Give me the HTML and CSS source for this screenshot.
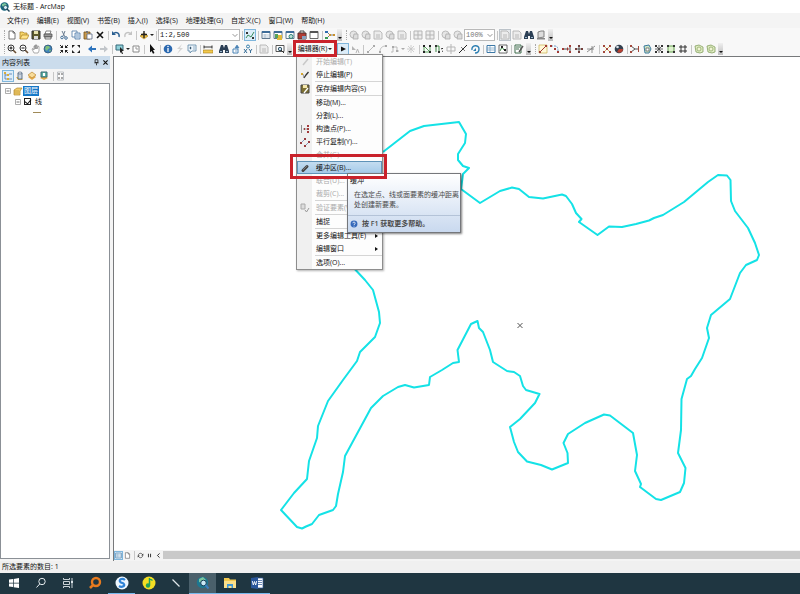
FILE: index.html
```html
<!DOCTYPE html>
<html lang="zh-CN">
<head>
    <meta charset="UTF-8">
    <meta name="viewport" content="width=device-width, initial-scale=1.0">
    <title>无标题 - ArcMap</title>
    <link rel="stylesheet" href="styles.css">
</head>
<body>
    <!-- icon set, 10x10 grid -->
    <svg class="defs" aria-hidden="true">
        <symbol id="new" viewBox="0 0 10 10"><path d="M2 1h4l2 2v6H2zM6 1v2h2" fill="#fff" stroke="#555" stroke-width=".8"/></symbol>
        <symbol id="open" viewBox="0 0 10 10"><path d="M1 9V2h3l1 1h3v2" fill="#f5d56b" stroke="#a67c1e" stroke-width=".7"/><path d="M1 9l2-4h7L8 9z" fill="#ffe48a" stroke="#a67c1e" stroke-width=".7"/></symbol>
        <symbol id="save" viewBox="0 0 10 10"><path d="M1 1h8v8H1z" fill="#5d5a2c" stroke="#333"/><path d="M3 1h4v3H3z" fill="#e8e3b0"/><path d="M3 6h4v3H3z" fill="#ddd"/></symbol>
        <symbol id="print" viewBox="0 0 10 10"><path d="M3 1h5L7 4H2z" fill="#fff" stroke="#555" stroke-width=".7"/><path d="M1 4h8v3H1z" fill="#999" stroke="#444" stroke-width=".7"/><path d="M2 7h6v2H2z" fill="#eee" stroke="#444" stroke-width=".7"/></symbol>
        <symbol id="cut" viewBox="0 0 10 10"><path d="M3 1l3 6M6 1L4 6" stroke="#6b7d90" fill="none"/><circle cx="3" cy="7.500" r="1.300" fill="none" stroke="#46729c"/><circle cx="7" cy="8" r="1.300" fill="none" stroke="#46729c"/></symbol>
        <symbol id="copy" viewBox="0 0 10 10"><path d="M1 1h5v6H1z" fill="#fff" stroke="#4c77a3" stroke-width=".8"/><path d="M4 3h5v6H4z" fill="#dce9f7" stroke="#4c77a3" stroke-width=".8"/><path d="M5 5h3M5 7h3" stroke="#4c77a3" stroke-width=".6"/></symbol>
        <symbol id="paste" viewBox="0 0 10 10"><path d="M1 2h6v7H1z" fill="#c99a4b" stroke="#75511b" stroke-width=".8"/><path d="M3 1h2v2H3z" fill="#777"/><path d="M4 4h5v5H4z" fill="#fff" stroke="#5a6b85" stroke-width=".8"/></symbol>
        <symbol id="cross" viewBox="0 0 10 10"><path d="M2 2l6 6M8 2L2 8" stroke="#111" stroke-width="1.600"/></symbol>
        <symbol id="undo" viewBox="0 0 10 10"><path d="M2 4c3-3 7-1 6 3" fill="none" stroke="#2a5f91" stroke-width="1.400"/><path d="M1 1v4h4z" fill="#2a5f91"/></symbol>
        <symbol id="redo" viewBox="0 0 10 10"><path d="M8 4C5 1 1 3 2 7" fill="none" stroke="#c3c3c3" stroke-width="1.300"/><path d="M9 1v4H5z" fill="#c3c3c3"/></symbol>
        <symbol id="add" viewBox="0 0 10 10"><path d="M5 3l4 3-4 3-4-3z" fill="#f3c443" stroke="#a87b18" stroke-width=".6"/><path d="M5 1v7M2 4.500h6" stroke="#222" stroke-width="1.400"/></symbol>
        <symbol id="editkit" viewBox="0 0 10 10"><path d="M1 8l2-3 3 2 3-5" fill="none" stroke="#3b8c5c"/><path d="M1 2h2v2H1zM7 7h2v2H7z" fill="#333"/></symbol>
        <symbol id="win" viewBox="0 0 10 10"><path d="M1 1.500h8v7H1z" fill="#fff" stroke="#60788e"/><path d="M1 1h8v2H1z" fill="#3e6d99"/><path d="M2 5h6M2 7h6M4 4v4" stroke="#8aa5bd" stroke-width=".6"/></symbol>
        <symbol id="wingreen" viewBox="0 0 10 10"><path d="M1 1.500h8v7H1z" fill="#fff" stroke="#60788e"/><path d="M1 1h8v2H1z" fill="#3e6d99"/><path d="M4 5h5v5H4z" fill="#e0b93c"/><path d="M2 4h3v4H2z" fill="#57a35b"/></symbol>
        <symbol id="winfind" viewBox="0 0 10 10"><path d="M1 1.500h8v7H1z" fill="#fff" stroke="#60788e"/><path d="M1 1h8v2H1z" fill="#3e6d99"/><circle cx="6" cy="6.500" r="2" fill="#bfe0d8" stroke="#2f8579"/></symbol>
        <symbol id="toolbox" viewBox="0 0 10 10"><path d="M1 3h8v6H1z" fill="#b03b34" stroke="#51302c"/><path d="M3 3V1h4v2" fill="none" stroke="#444"/><path d="M5 6h4v3H5z" fill="#86a2bf"/></symbol>
        <symbol id="console" viewBox="0 0 10 10"><path d="M1 1.500h8v7H1z" fill="#fff" stroke="#444" stroke-width=".8"/><path d="M1 1h8v2H1z" fill="#555"/></symbol>
        <symbol id="model" viewBox="0 0 10 10"><path d="M2 2l3 3h4M2 8l3-3" fill="none" stroke="#555" stroke-width=".8"/><path d="M0 1h3v2H0z" fill="#2f6cae"/><path d="M0 7h3v2H0z" fill="#3b9a55"/><path d="M4 4h2v2H4zM8 4h2v2H8z" fill="#c9912b"/></symbol>
        <symbol id="grid" viewBox="0 0 10 10"><path d="M1 1h8v8H1zM5 1v8M1 5h8" fill="#eee" stroke="#b5b5b5"/></symbol>
        <symbol id="page" viewBox="0 0 10 10"><circle cx="4.500" cy="4.500" r="3.500" fill="#e6e6e6" stroke="#bbb"/><path d="M5 4h4v5H4z" fill="#ddd" stroke="#aaa" stroke-width=".8"/></symbol>
        <symbol id="pageoff" viewBox="0 0 10 10"><path d="M1 1h6l2 2v6H1zM3 5h4M3 7h4" fill="#ececec" stroke="#b4b4b4" stroke-width=".9"/></symbol>
        <symbol id="frame" viewBox="0 0 10 10"><path d="M2 8V2l3-1h3v6z" fill="#ddd" stroke="#777" stroke-width=".9"/><path d="M1 8h8v1.500H1z" fill="#888"/></symbol>
        <symbol id="binoc" viewBox="0 0 10 10"><path d="M2 1h2l1 3 1-3h2l2 6v2H6V6H4v3H0V7z" fill="#2b3f55"/><path d="M1 7h2v1H1zM7 7h2v1H7z" fill="#9db6cc"/></symbol>
        <symbol id="zoomin" viewBox="0 0 10 10"><path d="M6 6l3 3" stroke="#684d33" stroke-width="1.600"/><circle cx="4" cy="4" r="3" fill="#fff" stroke="#333"/><path d="M2.500 4h3M4 2.500v3" stroke="#111"/></symbol>
        <symbol id="zoomout" viewBox="0 0 10 10"><path d="M6 6l3 3" stroke="#684d33" stroke-width="1.600"/><circle cx="4" cy="4" r="3" fill="#fff" stroke="#333"/><path d="M2.500 4h3" stroke="#111"/></symbol>
        <symbol id="hand" viewBox="0 0 10 10"><path d="M3 9L1 5l1-.5L3 6V2h1v3-4h1v4-4h1v4l1-3 1 .5V7L7 9z" fill="#fff" stroke="#777" stroke-width=".6"/></symbol>
        <symbol id="globe" viewBox="0 0 10 10"><circle cx="5" cy="5" r="4" fill="#3f83bd" stroke="#2e4d64" stroke-width=".7"/><path d="M3 2l3 0 1 2-2 1-1 2-2-2zM6 6h2L7 8z" fill="#7fc07a"/></symbol>
        <symbol id="fixin" viewBox="0 0 10 10"><path d="M4 1v3H1zM6 1v3h3zM4 9V6H1zM6 9V6h3z" fill="#222"/><path d="M1 1l2 2M9 1L7 3M1 9l2-2M9 9L7 7" stroke="#222"/></symbol>
        <symbol id="fixout" viewBox="0 0 10 10"><path d="M1 1h3L1 4zM9 1H6l3 3zM1 9h3L1 6zM9 9H6l3-3z" fill="#222"/></symbol>
        <symbol id="back" viewBox="0 0 10 10"><path d="M1 5l4-3.500V4h4v2H5v2.500z" fill="#2f74bd"/></symbol>
        <symbol id="fwd" viewBox="0 0 10 10"><path d="M9 5L5 1.500V4H1v2h4v2.500z" fill="#c2c6ca"/></symbol>
        <symbol id="select" viewBox="0 0 10 10"><path d="M1 1h7v5H1z" fill="#8fd0d8" stroke="#34687a"/><path d="M5 3l4 4H7l1 3-1 0-1-2-1 1z" fill="#222"/></symbol>
        <symbol id="clear" viewBox="0 0 10 10"><path d="M2 2h6v6H2z" fill="#fff" stroke="#888"/><path d="M4 4h2v2" fill="none" stroke="#999"/></symbol>
        <symbol id="pointer" viewBox="0 0 10 10"><path d="M3 0l5 6H6l1.500 3-1.500.8L4.500 7 3 8.500z" fill="#111"/></symbol>
        <symbol id="info" viewBox="0 0 10 10"><circle cx="5" cy="5" r="4.300" fill="#2c69b0"/><path d="M5 4v4" stroke="#fff" stroke-width="1.300"/><circle cx="5" cy="2.500" r=".8" fill="#fff"/></symbol>
        <symbol id="bolt" viewBox="0 0 10 10"><path d="M7 0L2 5h3L2 10l6-6H5z" fill="#d4d4d4"/></symbol>
        <symbol id="popup" viewBox="0 0 10 10"><path d="M1 1h8v6H5L3 9V7H1z" fill="#eef5fb" stroke="#5c85a6" stroke-width=".8"/><path d="M3 3h1v2H3zM6 3h2M6 5h2" stroke="#5c85a6" stroke-width=".6"/></symbol>
        <symbol id="measure" viewBox="0 0 10 10"><path d="M0 6h10v3H0z" fill="#f2c94e" stroke="#a1781d" stroke-width=".6"/><path d="M1 3h8M1 1.500v3M9 1.500v3" stroke="#222" stroke-width=".9"/></symbol>
        <symbol id="route" viewBox="0 0 10 10"><path d="M2 5h5v4H2z" fill="#fff" stroke="#4781b4"/><path d="M4 4l2-3 2 3zM4 7h2" fill="#4781b4" stroke="#4781b4" stroke-width=".7"/></symbol>
        <symbol id="xy" viewBox="0 0 10 10"><circle cx="5" cy="2.500" r="1.500" fill="none" stroke="#347dab"/><path d="M1 5l3 4M4 5L1 9M6 5l1.500 2L9 5M7.500 7v2" fill="none" stroke="#225f8c" stroke-width=".9"/></symbol>
        <symbol id="viewer" viewBox="0 0 10 10"><path d="M1 1.500h8v6H1z" fill="#fff" stroke="#444" stroke-width=".9"/><circle cx="5" cy="5" r="1.700" fill="#cde" stroke="#356"/><path d="M6 6l3 3" stroke="#333"/></symbol>
        <symbol id="play" viewBox="0 0 10 10"><path d="M3 2.500L8 5 3 7.500z" fill="#111"/></symbol>
        <symbol id="annot" viewBox="0 0 10 10"><path d="M2 2l4 4H2z" fill="#b5b5b5"/><path d="M6 9l1.500-4L9 9" stroke="#b5b5b5" fill="none"/></symbol>
        <symbol id="line" viewBox="0 0 10 10"><path d="M2 8l6-6" stroke="#bbb"/><path d="M1 7h2v2H1zM7 1h2v2H7z" fill="#aaa"/></symbol>
        <symbol id="arc" viewBox="0 0 10 10"><path d="M2 8c0-4 2-6 6-6" fill="none" stroke="#bbb"/><path d="M1 7h2v2H1zM7 1h2v2H7z" fill="#aaa"/></symbol>
        <symbol id="trace" viewBox="0 0 10 10"><path d="M1 8h2V3h4v4h2" fill="none" stroke="#bbb"/><path d="M2 2h2v2H2zM6 6h2v2H6z" fill="#aaa"/></symbol>
        <symbol id="burst" viewBox="0 0 10 10"><path d="M5 1v8M1 5h8M2 2l6 6M8 2L2 8" stroke="#c4c4c4" stroke-width=".8"/></symbol>
        <symbol id="vertices" viewBox="0 0 10 10"><path d="M2 2v6h6V2M2 2l6 6" fill="none" stroke="#47974c" stroke-width=".9"/><path d="M1 1h2v2H1zM1 7h2v2H1zM7 7h2v2H7zM7 1h2v2H7z" fill="#222"/></symbol>
        <symbol id="reshape" viewBox="0 0 10 10"><path d="M2 2v6M5 2v6M2 2h3" stroke="#3d8844" fill="none"/><path d="M1 1h2v2H1zM4 7h2v2H4zM7 4h2v1H8v3h1" fill="#333"/></symbol>
        <symbol id="splitg" viewBox="0 0 10 10"><path d="M1 3h8v4H1zM5 0v10" fill="none" stroke="#b5b5b5"/></symbol>
        <symbol id="split" viewBox="0 0 10 10"><path d="M1 9l8-8" stroke="#222"/><path d="M3 3l4 4" stroke="#555" stroke-width=".8"/></symbol>
        <symbol id="rotate" viewBox="0 0 10 10"><path d="M2 6c-1-5 7-6 7-1 0 3-2 4-4 4" fill="none" stroke="#2d7fb2" stroke-width="1.400"/><path d="M6 4v3H3z" fill="#2d7fb2"/></symbol>
        <symbol id="table" viewBox="0 0 10 10"><path d="M1 1.500h8v7H1z" fill="#fff" stroke="#3d79a7"/><path d="M1 4h8M1 6h8M4 2v6" stroke="#6d9cbf" stroke-width=".7"/></symbol>
        <symbol id="sketch" viewBox="0 0 10 10"><path d="M1 1h8v8H1z" fill="#fff" stroke="#444" stroke-width=".8"/><path d="M2 7l2-4 2 3 2 1" fill="none" stroke="#3d8844"/><path d="M3 2h2v2H3zM6 5h2v2H6z" fill="#222"/></symbol>
        <symbol id="template" viewBox="0 0 10 10"><path d="M1 1h6v8H1z" fill="#fff" stroke="#3f6c4c"/><path d="M2 3h4M2 5h3" stroke="#3f6c4c"/><path d="M9 2L5 8" stroke="#555" stroke-width="1.400"/></symbol>
        <symbol id="nodes" viewBox="0 0 10 10"><path d="M1 1h8v8H1z" fill="#fff9d8" stroke="#c9b04b" stroke-width=".7"/><path d="M2 8l6-6" stroke="#a23b35"/><path d="M1 7h2v2H1zM7 1h2v2H7z" fill="#a23b35"/></symbol>
        <symbol id="bend" viewBox="0 0 10 10"><path d="M1 2h4c3 0 3 3 3 6" fill="none" stroke="#6c9bc9" stroke-dasharray="2 1"/><path d="M0 1h2v2H0zM7 7h2v2H7zM4 4h2v2H4z" fill="#a23b35"/></symbol>
        <symbol id="extend" viewBox="0 0 10 10"><path d="M1 5h5M8 1v8" stroke="#333" stroke-width=".9"/><path d="M5 3l2 2-2 2zM0 4h2v2H0zM7 1h2v2H7zM7 7h2v2H7z" fill="#a23b35"/></symbol>
        <symbol id="cross2" viewBox="0 0 10 10"><path d="M5 1v8M1 5h8" stroke="#333" stroke-width=".8"/><path d="M4 1h2v2H4zM4 7h2v2H4zM1 4h2v2H1zM7 4h2v2H7z" fill="#74403c"/></symbol>
        <symbol id="meet" viewBox="0 0 10 10"><path d="M1 8l8-6M1 5h7M6 2v7" stroke="#777" stroke-width=".8"/></symbol>
        <symbol id="explode" viewBox="0 0 10 10"><path d="M2 2l6 6M8 2L2 8" stroke="#d7a83b" stroke-width=".8"/><path d="M1 1h2v2H1zM7 1h2v2H7zM4 4h2v2H4zM1 7h2v2H1zM7 7h2v2H7z" fill="#a2483b"/></symbol>
        <symbol id="ball" viewBox="0 0 10 10"><circle cx="5" cy="5" r="4.300" fill="#33404f"/><path d="M5 5h4c0 3-3 5-6 3z" fill="#b84132"/><circle cx="3.500" cy="3" r="1.300" fill="#dce3ea"/></symbol>
        <symbol id="clip" viewBox="0 0 10 10"><path d="M1 2l4 3h4M1 8l4-3" fill="none" stroke="#444" stroke-width=".9"/><path d="M0 1h2v2H0zM0 7h2v2H0zM8 2h1v6H8z" fill="#a2483b"/></symbol>
        <symbol id="poly" viewBox="0 0 10 10"><path d="M2 2l5-1 2 4-2 4H3z" fill="#cfe8c9" stroke="#3a789c"/><path d="M4 4h3v3H4z" fill="#fff" stroke="#555" stroke-width=".7"/></symbol>
        <symbol id="mesh" viewBox="0 0 10 10"><path d="M1 1l8 8M9 1L1 9M1 5h8M5 1v8" stroke="#444" stroke-width=".8"/><path d="M1 1h2v2H1zM7 7h2v2H7zM7 1h2v2H7zM1 7h2v2H1z" fill="#333"/></symbol>
        <symbol id="area" viewBox="0 0 10 10"><path d="M2 2h6v6H2z" fill="#dff0cf" stroke="#67a452"/><path d="M1 1h2v2H1zM7 7h2v2H7zM7 1h2v2H7zM1 7h2v2H1z" fill="#333"/></symbol>
        <symbol id="net" viewBox="0 0 10 10"><path d="M1 3h8M1 7h8M3 1v8M7 1v8" stroke="#333"/></symbol>
        <symbol id="blob" viewBox="0 0 10 10"><path d="M1 2l4-1 4 2v5L6 9 2 8z" fill="#dfecc2" stroke="#84a060" stroke-width=".8"/><circle cx="5" cy="5" r="2" fill="#f0f5d4" stroke="#84a060" stroke-width=".7"/></symbol>
        <symbol id="layers" viewBox="0 0 10 10"><path d="M1 4l3-2h5L7 5v4H1z" fill="#f2cd6a" stroke="#b2862c" stroke-width=".7"/><path d="M1 5h5M1 7h5" stroke="#b2862c" stroke-width=".6"/></symbol>
        <symbol id="tree" viewBox="0 0 10 10"><path d="M2 2v6h2M2 4h2M6 3h3M6 8h3" fill="none" stroke="#57a" stroke-width=".8"/><path d="M1 1h2v2H1zM4 3h2v2H4zM4 7h2v2H4z" fill="#d9ae39"/></symbol>
        <symbol id="source" viewBox="0 0 10 10"><path d="M1 6h5l2 3H3z" fill="#e5bd50"/><path d="M3 2h4v6H3z" fill="#ccd5df" stroke="#445a77" stroke-width=".8"/><ellipse cx="5" cy="2" rx="2" ry="1" fill="#fff" stroke="#445a77" stroke-width=".7"/></symbol>
        <symbol id="diamond" viewBox="0 0 10 10"><path d="M5 3l4 3-4 3-4-3z" fill="#e3ab4a"/><path d="M5 1l4 3-4 3-4-3z" fill="#f8dc9a" stroke="#bb8730" stroke-width=".7"/></symbol>
        <symbol id="selview" viewBox="0 0 10 10"><path d="M5 4l4 3-4 2-4-2z" fill="#e3ab4a"/><path d="M2 1h6v5H2z" fill="#5db3a5" stroke="#3a6a75"/><path d="M4 2h2v3H4z" fill="#fff"/></symbol>
        <symbol id="options" viewBox="0 0 10 10"><path d="M1.500 1h6v8h-6z" fill="#fafafa" stroke="#a6acb3" stroke-width=".7"/><path d="M3 2v2M3 6v2M5 3h2M5 7h2" stroke="#555"/></symbol>
        <symbol id="minus" viewBox="0 0 10 10"><path d="M2.500 2.500h5v5h-5z" fill="#fff" stroke="#999" stroke-width=".8"/><path d="M3.500 5h3" stroke="#555" stroke-width=".8"/></symbol>
        <symbol id="pencil" viewBox="0 0 10 10"><path d="M8.500 2L6 5 4 8" fill="none" stroke="#333" stroke-width="1.300"/><path d="M1 3h2v2H1z" fill="#d9a82c"/><path d="M3 4l1 4" stroke="#777" stroke-width=".7"/></symbol>
        <symbol id="pencilg" viewBox="0 0 10 10"><path d="M8 2L3 8" stroke="#c8c8c8" stroke-width="1.500"/></symbol>
        <symbol id="saveedit" viewBox="0 0 10 10"><path d="M1 1h8v8H1z" fill="#7e7132" stroke="#444"/><path d="M3 1h4v3H3z" fill="#f4e7ae"/><path d="M8 4L4 9" stroke="#fff" stroke-width="1.300"/></symbol>
        <symbol id="points" viewBox="0 0 10 10"><path d="M1.500 1v8M3 5h4" stroke="#777" stroke-width=".8"/><path d="M7 1h2v2H7zM7 4h2v2H7zM7 7h2v2H7zM4 4h1v2H4z" fill="#a13a3a"/></symbol>
        <symbol id="parallel" viewBox="0 0 10 10"><path d="M1 6l4-4M5 9l4-4" stroke="#6683ac" stroke-width=".8"/><path d="M0 5h2v2H0zM4 1h2v2H4zM4 8h2v2H4zM8 4h2v2H8z" fill="#963b40"/></symbol>
        <symbol id="buffer" viewBox="0 0 10 10"><path d="M3 7.500l4-4" stroke="#444" stroke-width="3" stroke-linecap="round"/><path d="M3 7l4-4" stroke="#888" stroke-width=".8"/></symbol>
        <symbol id="valid" viewBox="0 0 10 10"><path d="M1 1h4v5H1z" fill="#ddd" stroke="#aaa"/><path d="M5 7l1.500 2L9 5" fill="none" stroke="#999"/></symbol>
        <symbol id="pin" viewBox="0 0 10 10"><path d="M3 1h4v4H3zM2 5.500h6M5 6v3" fill="none" stroke="#222" stroke-width="1.200"/></symbol>
        <symbol id="refresh" viewBox="0 0 10 10"><path d="M2 5c0-4 5-4 6-1M8 5c0 4-5 4-6 1" fill="none" stroke="#333"/><path d="M9 2v3H6zM1 8V5h3z" fill="#333"/></symbol>
        <symbol id="pause" viewBox="0 0 10 10"><path d="M3.500 2.500v5M6.500 2.500v5" stroke="#333" stroke-width="1.400"/></symbol>
        <symbol id="left" viewBox="0 0 10 10"><path d="M6.500 2L3.500 5l3 3" fill="none" stroke="#222" stroke-width="1.300"/></symbol>
        <symbol id="down" viewBox="0 0 10 10"><path d="M1 3.500l4 4 4-4" fill="none" stroke="#777" stroke-width="1.300"/></symbol>
        <symbol id="help" viewBox="0 0 10 10"><circle cx="5" cy="5" r="4.300" fill="#3569ba"/><path d="M3.500 4c0-2 3-2 3 0 0 1-1.500 1-1.500 2.300M5 7.200v1" fill="none" stroke="#fff"/></symbol>
    </svg>

    <div class="app">
        <header class="titlebar">
            <svg class="icon logo" viewBox="0 0 10 10"><circle cx="4.500" cy="4.500" r="4.200" fill="#17657c"/><path d="M2 2l3-1 2 2-3 2-2-1z" fill="#79c39b"/><circle cx="5.500" cy="5.500" r="2" fill="#d6eef7" stroke="#173e53" stroke-width=".7"/><path d="M7 7l2.500 2.500" stroke="#173e53" stroke-width="1.400"/></svg>
            <h1>无标题 - ArcMap</h1>
        </header>

        <nav class="menubar">
            <button>文件(F)</button>
            <button>编辑(E)</button>
            <button>视图(V)</button>
            <button>书签(B)</button>
            <button>插入(I)</button>
            <button>选择(S)</button>
            <button>地理处理(G)</button>
            <button>自定义(C)</button>
            <button>窗口(W)</button>
            <button>帮助(H)</button>
        </nav>

        <div class="toolbar">
            <span class="grip"></span>
            <button class="tool" title="新建"><svg class="icon"><use href="#new"/></svg></button>
            <button class="tool" title="打开"><svg class="icon"><use href="#open"/></svg></button>
            <button class="tool" title="保存"><svg class="icon"><use href="#save"/></svg></button>
            <button class="tool" title="打印"><svg class="icon"><use href="#print"/></svg></button>
            <span class="sep"></span>
            <button class="tool" title="剪切"><svg class="icon"><use href="#cut"/></svg></button>
            <button class="tool" title="复制"><svg class="icon"><use href="#copy"/></svg></button>
            <button class="tool" title="粘贴"><svg class="icon"><use href="#paste"/></svg></button>
            <button class="tool" title="删除"><svg class="icon"><use href="#cross"/></svg></button>
            <span class="sep"></span>
            <button class="tool" title="撤消"><svg class="icon"><use href="#undo"/></svg></button>
            <button class="tool" title="恢复"><svg class="icon"><use href="#redo"/></svg></button>
            <span class="sep"></span>
            <button class="tool" title="添加数据"><svg class="icon"><use href="#add"/></svg></button>
            <span class="arrow"></span>
            <span class="sep"></span>
            <span class="combo scale">
                <select aria-label="地图比例"><option>1:2,500</option></select>
                <svg class="chevron"><use href="#down"/></svg>
            </span>
            <span class="sep"></span>
            <button class="tool on" title="编辑器工具条"><svg class="icon"><use href="#editkit"/></svg></button>
            <span class="sep"></span>
            <button class="tool" title="内容列表"><svg class="icon"><use href="#win"/></svg></button>
            <button class="tool" title="目录"><svg class="icon"><use href="#wingreen"/></svg></button>
            <button class="tool" title="搜索"><svg class="icon"><use href="#winfind"/></svg></button>
            <button class="tool" title="工具箱"><svg class="icon"><use href="#toolbox"/></svg></button>
            <button class="tool" title="Python"><svg class="icon"><use href="#console"/></svg></button>
            <span class="sep"></span>
            <button class="tool" title="模型构建器"><svg class="icon"><use href="#model"/></svg></button>
            <span class="overflow"></span>
            <span class="grip"></span>
            <button class="tool" title="放大布局"><svg class="icon"><use href="#page"/></svg></button>
            <button class="tool" title="缩小布局"><svg class="icon"><use href="#page"/></svg></button>
            <button class="tool" title="平移布局"><svg class="icon"><use href="#pageoff"/></svg></button>
            <button class="tool" title="整个页面"><svg class="icon"><use href="#page"/></svg></button>
            <button class="tool" title="100%"><svg class="icon"><use href="#pageoff"/></svg></button>
            <span class="sep"></span>
            <button class="tool" title="固定放大"><svg class="icon"><use href="#grid"/></svg></button>
            <button class="tool" title="固定缩小"><svg class="icon"><use href="#grid"/></svg></button>
            <span class="sep"></span>
            <button class="tool" title="上一范围"><svg class="icon"><use href="#page"/></svg></button>
            <button class="tool" title="下一范围"><svg class="icon"><use href="#page"/></svg></button>
            <span class="combo percent">
                <select aria-label="缩放百分比"><option>100%</option></select>
                <svg class="chevron"><use href="#down"/></svg>
            </span>
            <span class="sep"></span>
            <button class="tool off" title="切换草图模式"><svg class="icon"><use href="#pageoff"/></svg></button>
            <button class="tool" title="焦点数据框"><svg class="icon"><use href="#pageoff"/></svg></button>
            <button class="tool" title="更改布局"><svg class="icon"><use href="#binoc"/></svg></button>
            <button class="tool" title="数据驱动页面"><svg class="icon"><use href="#frame"/></svg></button>
            <span class="overflow"></span>
        </div>

        <div class="toolbar">
            <span class="grip"></span>
            <button class="tool" title="放大"><svg class="icon"><use href="#zoomin"/></svg></button>
            <button class="tool" title="缩小"><svg class="icon"><use href="#zoomout"/></svg></button>
            <button class="tool" title="平移"><svg class="icon"><use href="#hand"/></svg></button>
            <button class="tool" title="全图"><svg class="icon"><use href="#globe"/></svg></button>
            <span class="sep blank"></span>
            <button class="tool" title="固定比例放大"><svg class="icon"><use href="#fixin"/></svg></button>
            <button class="tool" title="固定比例缩小"><svg class="icon"><use href="#fixout"/></svg></button>
            <span class="sep blank"></span>
            <button class="tool" title="返回"><svg class="icon"><use href="#back"/></svg></button>
            <button class="tool" title="前进"><svg class="icon"><use href="#fwd"/></svg></button>
            <span class="sep"></span>
            <button class="tool" title="选择要素"><svg class="icon"><use href="#select"/></svg></button>
            <span class="arrow"></span>
            <button class="tool" title="清除所选要素"><svg class="icon"><use href="#clear"/></svg></button>
            <span class="sep"></span>
            <button class="tool" title="选择元素"><svg class="icon"><use href="#pointer"/></svg></button>
            <span class="sep"></span>
            <button class="tool" title="识别"><svg class="icon"><use href="#info"/></svg></button>
            <button class="tool" title="超链接"><svg class="icon"><use href="#bolt"/></svg></button>
            <button class="tool" title="HTML 弹出窗口"><svg class="icon"><use href="#popup"/></svg></button>
            <span class="sep"></span>
            <button class="tool" title="测量"><svg class="icon"><use href="#measure"/></svg></button>
            <span class="sep blank"></span>
            <button class="tool" title="查找"><svg class="icon"><use href="#binoc"/></svg></button>
            <button class="tool" title="查找路径"><svg class="icon"><use href="#route"/></svg></button>
            <button class="tool" title="转到 XY"><svg class="icon"><use href="#xy"/></svg></button>
            <span class="sep"></span>
            <button class="tool" title="时间滑块"><svg class="icon"><use href="#pageoff"/></svg></button>
            <span class="sep"></span>
            <button class="tool" title="创建查看器窗口"><svg class="icon"><use href="#viewer"/></svg></button>
            <span class="overflow"></span>

            <div class="editor">
                <button class="editor-btn">编辑器(R)<span class="arrow"></span></button>
                <div class="menu">
                    <button class="item" disabled><svg class="icon"><use href="#pencilg"/></svg><span>开始编辑(T)</span></button>
                    <button class="item"><svg class="icon"><use href="#pencil"/></svg><span>停止编辑(P)</span></button>
                    <hr>
                    <button class="item"><svg class="icon"><use href="#saveedit"/></svg><span>保存编辑内容(S)</span></button>
                    <hr>
                    <button class="item"><i></i><span>移动(M)...</span></button>
                    <button class="item"><i></i><span>分割(L)...</span></button>
                    <button class="item"><svg class="icon"><use href="#points"/></svg><span>构造点(P)...</span></button>
                    <button class="item"><svg class="icon"><use href="#parallel"/></svg><span>平行复制(Y)...</span></button>
                    <button class="item" disabled><i></i><span>合并(G)...</span></button>
                    <div class="current">
                        <button class="item active"><svg class="icon"><use href="#buffer"/></svg><span>缓冲区(B)...</span></button>
                        <div class="tooltip" role="tooltip">
                            <h2>缓冲</h2>
                            <p>在选定点、线或面要素的缓冲距离处创建新要素。</p>
                            <div class="tip-help"><svg class="icon"><use href="#help"/></svg>按 F1 获取更多帮助。</div>
                        </div>
                    </div>
                    <button class="item" disabled><i></i><span>联合(U)...</span></button>
                    <button class="item" disabled><i></i><span>裁剪(C)...</span></button>
                    <hr>
                    <button class="item" disabled><svg class="icon"><use href="#valid"/></svg><span>验证要素(V)</span></button>
                    <hr>
                    <button class="item"><i></i><span>捕捉</span></button>
                    <hr>
                    <button class="item sub"><i></i><span>更多编辑工具(E)</span></button>
                    <button class="item sub"><i></i><span>编辑窗口</span></button>
                    <hr>
                    <button class="item"><i></i><span>选项(O)...</span></button>
                </div>
            </div>

            <button class="tool on" title="编辑工具"><svg class="icon"><use href="#play"/></svg></button>
            <button class="tool" title="编辑注记"><svg class="icon"><use href="#annot"/></svg></button>
            <span class="sep"></span>
            <button class="tool" title="直线段"><svg class="icon"><use href="#line"/></svg></button>
            <button class="tool" title="弧段"><svg class="icon"><use href="#arc"/></svg></button>
            <button class="tool" title="追踪"><svg class="icon"><use href="#trace"/></svg></button>
            <span class="arrow gray"></span>
            <button class="tool" title="点"><svg class="icon"><use href="#burst"/></svg></button>
            <span class="sep"></span>
            <button class="tool" title="编辑折点"><svg class="icon"><use href="#vertices"/></svg></button>
            <button class="tool" title="修整要素"><svg class="icon"><use href="#reshape"/></svg></button>
            <button class="tool" title="裁剪面"><svg class="icon"><use href="#splitg"/></svg></button>
            <button class="tool" title="分割"><svg class="icon"><use href="#split"/></svg></button>
            <button class="tool" title="旋转"><svg class="icon"><use href="#rotate"/></svg></button>
            <span class="sep"></span>
            <button class="tool" title="属性"><svg class="icon"><use href="#table"/></svg></button>
            <button class="tool" title="草图属性"><svg class="icon"><use href="#sketch"/></svg></button>
            <span class="sep"></span>
            <button class="tool" title="创建要素"><svg class="icon"><use href="#template"/></svg></button>
            <span class="overflow"></span>
            <span class="grip"></span>
            <button class="tool" title="拓扑"><svg class="icon"><use href="#nodes"/></svg></button>
            <button class="tool" title="内圆角"><svg class="icon"><use href="#bend"/></svg></button>
            <button class="tool" title="延伸"><svg class="icon"><use href="#extend"/></svg></button>
            <button class="tool" title="修剪"><svg class="icon"><use href="#cross2"/></svg></button>
            <button class="tool" title="线相交"><svg class="icon"><use href="#meet"/></svg></button>
            <span class="sep"></span>
            <button class="tool" title="拆分多部件"><svg class="icon"><use href="#explode"/></svg></button>
            <button class="tool" title="概化"><svg class="icon"><use href="#ball"/></svg></button>
            <span class="sep"></span>
            <button class="tool" title="打断相交线"><svg class="icon"><use href="#clip"/></svg></button>
            <button class="tool" title="构造面"><svg class="icon"><use href="#poly"/></svg></button>
            <button class="tool" title="分割面"><svg class="icon"><use href="#mesh"/></svg></button>
            <button class="tool" title="对齐至形状"><svg class="icon"><use href="#area"/></svg></button>
            <button class="tool" title="替换几何"><svg class="icon"><use href="#net"/></svg></button>
            <span class="sep"></span>
            <button class="tool" title="概化要素"><svg class="icon"><use href="#blob"/></svg></button>
            <button class="tool" title="平滑"><svg class="icon"><use href="#blob"/></svg></button>
            <span class="overflow"></span>
        </div>

        <div class="workspace">
            <aside class="toc">
                <div class="toc-head">
                    <h2>内容列表</h2>
                    <button title="自动隐藏"><svg class="icon"><use href="#pin"/></svg></button>
                    <button title="关闭"><svg class="icon"><use href="#cross"/></svg></button>
                </div>
                <div class="toc-tools">
                    <button class="tool on" title="按绘制顺序列出"><svg class="icon"><use href="#tree"/></svg></button>
                    <button class="tool" title="按源列出"><svg class="icon"><use href="#source"/></svg></button>
                    <button class="tool" title="按可见性列出"><svg class="icon"><use href="#diamond"/></svg></button>
                    <button class="tool" title="按选择列出"><svg class="icon"><use href="#selview"/></svg></button>
                    <span class="sep"></span>
                    <button class="tool" title="选项"><svg class="icon"><use href="#options"/></svg></button>
                </div>
                <div class="tree">
                    <div class="node"><svg class="icon"><use href="#minus"/></svg><svg class="icon"><use href="#layers"/></svg><b>图层</b></div>
                    <div class="node child"><svg class="icon"><use href="#minus"/></svg><input type="checkbox" id="layer-line" checked><label for="layer-line">线</label></div>
                    <div class="symbol"></div>
                </div>
            </aside>

            <main class="map">
                <div class="canvas">
                    <svg width="686" height="494" viewBox="114 57 686 494">
                        <path class="feature" d="M383 152L410 131 424 126 459 122 466 134 465 143 458 154 458 160 463 166 469 168 463 174 461 189 480 203 500 191 512 187.500 519 189 529 197 543 198.500 562 194.500 566 196 572 204 576 213 581.500 219 579 222 597.500 235 609 226.500 622 227 636 224 649 220.500 654 218 663 215 684 202 708 182 718 175 727 175.500 730.500 180 731 201 735 211 748 228 755 243 759 255 757 260 746 265 740 273 730 299 711 315 707 328 709 338 702 358 695 369 691 376 687 379 681.500 399 681 430 678 453 685.500 468 684 483 680 492 661 500 656 499 640 487 641 484 635 471 637 455 633 433 610 415.500 604 414.500 585 423 568 434 563.500 443 567.500 453 568 463 552 469.500 541 465 527 461.500 518 452 514 442 510 427 520 419 535 403 539.500 394 526 390 523 386 520 376 514 372 507 371 493 362 490 350 483 332 479 328 477.500 321 471 324 457.500 350 459 362 453 363 442 370 430 377 429 385 414 387.500 405 385 398 387 383 396 371 408 345 456 343 472 338 494 336 506 333 510 319 515 312 524 306 526.500 302 528.500 297 527 281 510 294 493 307 479 309 461 317 438 318 426 328 401 343 380 357 361 360 352 375 337 380 323 379 312 373 290 365 280 350 264"/>
                        <path class="cursor" d="M517.500 323l5 5M522.500 323l-5 5"/>
                    </svg>
                </div>
                <div class="map-foot">
                    <button class="tool on" title="数据视图"><svg class="icon"><use href="#table"/></svg></button>
                    <button class="tool" title="布局视图"><svg class="icon"><use href="#new"/></svg></button>
                    <span class="sep"></span>
                    <button class="tool" title="刷新"><svg class="icon"><use href="#refresh"/></svg></button>
                    <button class="tool" title="暂停绘制"><svg class="icon"><use href="#pause"/></svg></button>
                    <button class="tool" title="向左滚动"><svg class="icon"><use href="#left"/></svg></button>
                    <div class="scroll"></div>
                </div>
            </main>
        </div>

        <footer class="status">所选要素的数目: 1</footer>
    </div>

    <nav class="taskbar">
        <button title="开始"><svg viewBox="0 0 14 14"><path d="M2 3.500l4-.5v3.700H2zM6.700 2.900L12 2v4.700H6.700zM2 7.400h4V11l-4-.5zM6.700 7.400H12V12l-5.300-.8z" fill="#fff"/></svg></button>
        <button title="搜索"><svg viewBox="0 0 14 14"><circle cx="8" cy="5.500" r="3.200" fill="none" stroke="#e6ecef"/><path d="M5.700 8L2.500 11.500" stroke="#e6ecef"/></svg></button>
        <button title="任务视图"><svg viewBox="0 0 14 14"><path d="M2.500 5.500h6v3h-6zM2.500 2v1.500h6V2M2.500 12v-1.500h6V12M11 2v10" fill="none" stroke="#dce4e8" stroke-width=".9"/><path d="M10 5h2v2h-2z" fill="#dce4e8"/></svg></button>
        <button title="Everything"><svg viewBox="0 0 14 14"><circle cx="8" cy="6" r="4" fill="none" stroke="#e87b1f" stroke-width="2.400"/><path d="M5.200 8.800L2 12" stroke="#e87b1f" stroke-width="2.600"/></svg></button>
        <button class="running" title="搜狗"><svg viewBox="0 0 14 14"><circle cx="7" cy="7" r="6.500" fill="#eef7ff"/><path d="M10 4C7 1.500 3 4 5.500 6.200L8.500 7.500C11 9.500 7 12 4 10" fill="none" stroke="#2f83d6" stroke-width="2.200"/></svg></button>
        <button title="QQ音乐"><svg viewBox="0 0 14 14"><circle cx="7" cy="7" r="6.500" fill="#f4df24"/><path d="M7.500 2v7M7.500 2.500l3 2" stroke="#20a35b" stroke-width="1.500"/><circle cx="6" cy="9.500" r="2.200" fill="#20a35b"/></svg></button>
        <button title="绘图"><svg viewBox="0 0 14 14"><path d="M3.500 3.500l7 7" stroke="#dfe6e9" stroke-width="1.200"/></svg></button>
        <button class="running current-app" title="ArcMap"><svg viewBox="0 0 14 14"><circle cx="6.500" cy="6.500" r="5.700" fill="#1d7791"/><path d="M3 3l4-2 3 3-4 3-3-1z" fill="#7bc7a0"/><circle cx="7.500" cy="7" r="2.800" fill="#cbe8f5" stroke="#163e58"/><path d="M9.500 9l3 3.500" stroke="#3a7fc1" stroke-width="2"/></svg></button>
        <button class="running" title="文件资源管理器"><svg viewBox="0 0 14 14"><path d="M1 2h5l1 1.500h6V12H1z" fill="#f3c94f"/><path d="M1 5h12v7H1z" fill="#fce08a"/><path d="M4 8h6v4H8.500v-2h-3v2H4z" fill="#4098d6"/></svg></button>
        <button class="running" title="Word"><svg viewBox="0 0 14 14"><path d="M7 2h6v10H7z" fill="#fff" stroke="#2b579a" stroke-width=".7"/><path d="M8 4.500h4M8 6.500h4M8 8.500h4" stroke="#2b579a" stroke-width=".7"/><path d="M1 2l7-1v12l-7-1z" fill="#2b579a"/><path d="M2.300 5l1 4 1.200-3.500L5.700 9l1-4" fill="none" stroke="#fff" stroke-width=".9"/></svg></button>
    </nav>
</body>
</html>
```

FILE: styles.css
```css
:root {
    --chrome: #f4f4f4;
    --mark: #c9222b;
    --feature: #14e2e6;
}

* { box-sizing: border-box; }

body, h1, h2, p { margin: 0; }

body {
    height: 100vh;
    display: flex;
    flex-direction: column;
    overflow: hidden;
    background: var(--chrome);
    color: #111;
    font-family: "Open Sans", "Noto Sans CJK SC", sans-serif;
    font-size: 7px;
    line-height: 12px;
}

button, select, input { font: inherit; color: inherit; margin: 0; }

button {
    padding: 0;
    border: 0;
    background: none;
    white-space: nowrap;
}

.defs { position: absolute; width: 0; height: 0; }

.icon { display: block; flex: none; width: 10px; height: 10px; }

.app {
    flex: 1;
    min-height: 0;
    display: flex;
    flex-direction: column;
}

/* title and menus */
.titlebar {
    display: flex;
    align-items: center;
    gap: 3px;
    height: 13px;
    background: #fff;
}

.titlebar h1 { font-size: 7px; font-weight: normal; }

.menubar {
    display: flex;
    align-items: center;
    gap: 8px;
    height: 15px;
    padding-left: 7px;
}

/* toolbars */
.toolbar {
    display: flex;
    align-items: center;
    height: 14px;
    padding-left: 1px;
    background: #f8f8f8;
}

.tool {
    flex: none;
    display: flex;
    align-items: center;
    justify-content: center;
    width: 12px;
    height: 12px;
}

.tool.on { background: #dcedf9; border: 1px solid #7fb6dc; }
.tool.off { background: #e6e9ec; border: 1px solid #bcc3c9; }

.grip {
    flex: none;
    width: 1px;
    height: 10px;
    margin: 0 1px 0 3px;
    border-left: 1px dotted #aaa;
}

.sep {
    flex: none;
    width: 1px;
    height: 9px;
    margin: 0 1px 0 2px;
    background: #c6c6c6;
}

.sep.blank { background: none; }

.arrow {
    flex: none;
    border: 2px solid transparent;
    border-top-color: #222;
    border-bottom-width: 0;
}

.arrow.gray { border-top-color: #aaa; }

.overflow {
    flex: none;
    align-self: stretch;
    display: flex;
    align-items: flex-end;
    justify-content: center;
    width: 5px;
    margin: 1px;
    padding-bottom: 2px;
    background: linear-gradient(#f0f0f0, #bcbcbc);
}

.overflow::after {
    content: "";
    border: 2px solid transparent;
    border-top-color: #111;
    border-bottom-width: 0;
}

.combo { position: relative; flex: none; height: 12px; }
.combo.scale { width: 82px; }
.combo.percent { width: 31px; }

.combo select {
    display: block;
    width: 100%;
    height: 12px;
    padding: 0 0 0 1px;
    border: 1px solid #b9b9b9;
    border-radius: 0;
    background: #fff;
    appearance: none;
    font-family: "Liberation Mono", monospace;
    font-size: 7px;
    line-height: 10px;
}

.combo.percent select { color: #777; }

.chevron {
    position: absolute;
    top: 3px;
    right: 2px;
    width: 6px;
    height: 6px;
    pointer-events: none;
}

/* editor drop-down */
.editor { position: relative; flex: none; width: 44px; height: 14px; }

.editor-btn {
    position: absolute;
    z-index: 3;
    inset: -2px 0 -1px 0;
    display: flex;
    align-items: center;
    justify-content: center;
    gap: 1px;
    border: 3px solid var(--mark);
    background: #f8f8f8;
}

.menu {
    position: absolute;
    z-index: 2;
    top: 12px;
    left: 3px;
    width: 87px;
    border: 1px solid #8d8d8d;
    background: linear-gradient(90deg, #f0f0f0 15px, #fdfdfd 15px);
    box-shadow: 1px 1px 2px rgba(0, 0, 0, 0.3);
}

.menu hr {
    height: 1px;
    margin: 0 0 0 18px;
    border: 0;
    background: #d5d5d5;
}

.item {
    display: flex;
    align-items: center;
    gap: 6px;
    width: 100%;
    height: 13px;
    padding-left: 3px;
    text-align: left;
}

.item i { width: 10px; }
.item:disabled { color: #ababab; }

.item.sub::after {
    content: "";
    margin: 0 4px 0 auto;
    border: 2px solid transparent;
    border-left: 3px solid #111;
    border-right-width: 0;
}

.item.active {
    border: 1px solid #5f93b8;
    padding-left: 2px;
    background: linear-gradient(#c4dcf0, #a5cbe9);
}

.current { position: relative; }

.current::before {
    content: "";
    position: absolute;
    z-index: 2;
    inset: -7px -5px -5px -7px;
    border: 3px solid var(--mark);
    pointer-events: none;
}

.tooltip {
    position: absolute;
    z-index: 1;
    top: 12px;
    left: 50px;
    width: 114px;
    border: 1px solid #75777b;
    background: linear-gradient(#fff, #c9d9ef);
    box-shadow: 1px 1px 2px rgba(0, 0, 0, 0.5);
    color: #4b4b4b;
    line-height: 10px;
}

.tooltip h2 {
    padding: 2px;
    font-size: 7px;
    font-weight: normal;
    color: #222;
}

.tooltip p { padding: 2px 0 5px 6px; }

.tip-help {
    display: flex;
    align-items: center;
    gap: 4px;
    padding: 3px 2px;
    border-top: 1px solid #b4c3d8;
    font-weight: 600;
}

.tip-help .icon { width: 8px; height: 10px; }

/* table of contents */
.workspace {
    flex: 1;
    min-height: 0;
    display: flex;
    gap: 3px;
}

.toc {
    flex: none;
    display: flex;
    flex-direction: column;
    width: 110px;
}

.toc-head {
    display: flex;
    align-items: center;
    height: 13px;
    padding: 0 1px 0 2px;
    background: #cbdcec;
}

.toc-head h2 { flex: 1; font-size: 7px; font-weight: normal; }
.toc-head .icon { width: 7px; height: 7px; }
.toc-head button + button { margin-left: 2px; }

.toc-tools {
    display: flex;
    align-items: center;
    height: 14px;
    padding-left: 2px;
}

.toc-tools .sep { margin: 0 1px 0 3px; }

.tree {
    flex: 1;
    margin-bottom: 2px;
    padding: 1px 2px;
    border: 1px solid #8b9096;
    background: #fff;
}

.node { display: flex; align-items: center; height: 11px; }
.node.child { padding-left: 10px; }

.node b {
    padding: 0 1px;
    background: #1678c8;
    color: #fff;
    font-weight: normal;
    line-height: 10px;
}

.node input {
    appearance: none;
    display: flex;
    width: 7px;
    height: 7px;
    margin-left: 1px;
    border: 1px solid #222;
    background: #fff;
}

.node input:checked::after {
    content: "";
    width: 3px;
    height: 5px;
    margin: -1px 0 0 1px;
    border: solid #111;
    border-width: 0 1px 1px 0;
    transform: rotate(40deg);
}

.node label { margin-left: 4px; }

.symbol { width: 8px; height: 1px; margin: 5px 0 0 30px; background: #a08a58; }

/* map */
.map {
    flex: 1;
    min-width: 0;
    display: flex;
    flex-direction: column;
    padding-bottom: 1px;
    border-top: 1px solid #77797b;
    border-left: 1px solid #77797b;
}

.canvas { flex: 1; min-height: 0; overflow: hidden; background: #fff; }
.canvas svg { display: block; }

.feature {
    fill: none;
    stroke: var(--feature);
    stroke-width: 2;
    stroke-linejoin: round;
}

.cursor { stroke: #555; stroke-width: 1; }

.map-foot { display: flex; align-items: center; height: 10px; }
.map-foot .tool { width: 9px; height: 9px; }
.map-foot .icon { width: 7px; height: 7px; }
.scroll { flex: 1; height: 8px; background: #c9c9c9; }

.status {
    height: 12px;
    padding-left: 2px;
    background: #f0f0f0;
}

/* taskbar */
.taskbar { display: flex; height: 21px; background: #1f3641; }

.taskbar button {
    display: flex;
    align-items: center;
    justify-content: center;
    width: 27px;
    border-bottom: 1px solid transparent;
}

.taskbar svg { width: 14px; height: 14px; }
.taskbar .running { border-bottom-color: #76b9ed; }
.taskbar .current-app { background: #4a606b; }
```
